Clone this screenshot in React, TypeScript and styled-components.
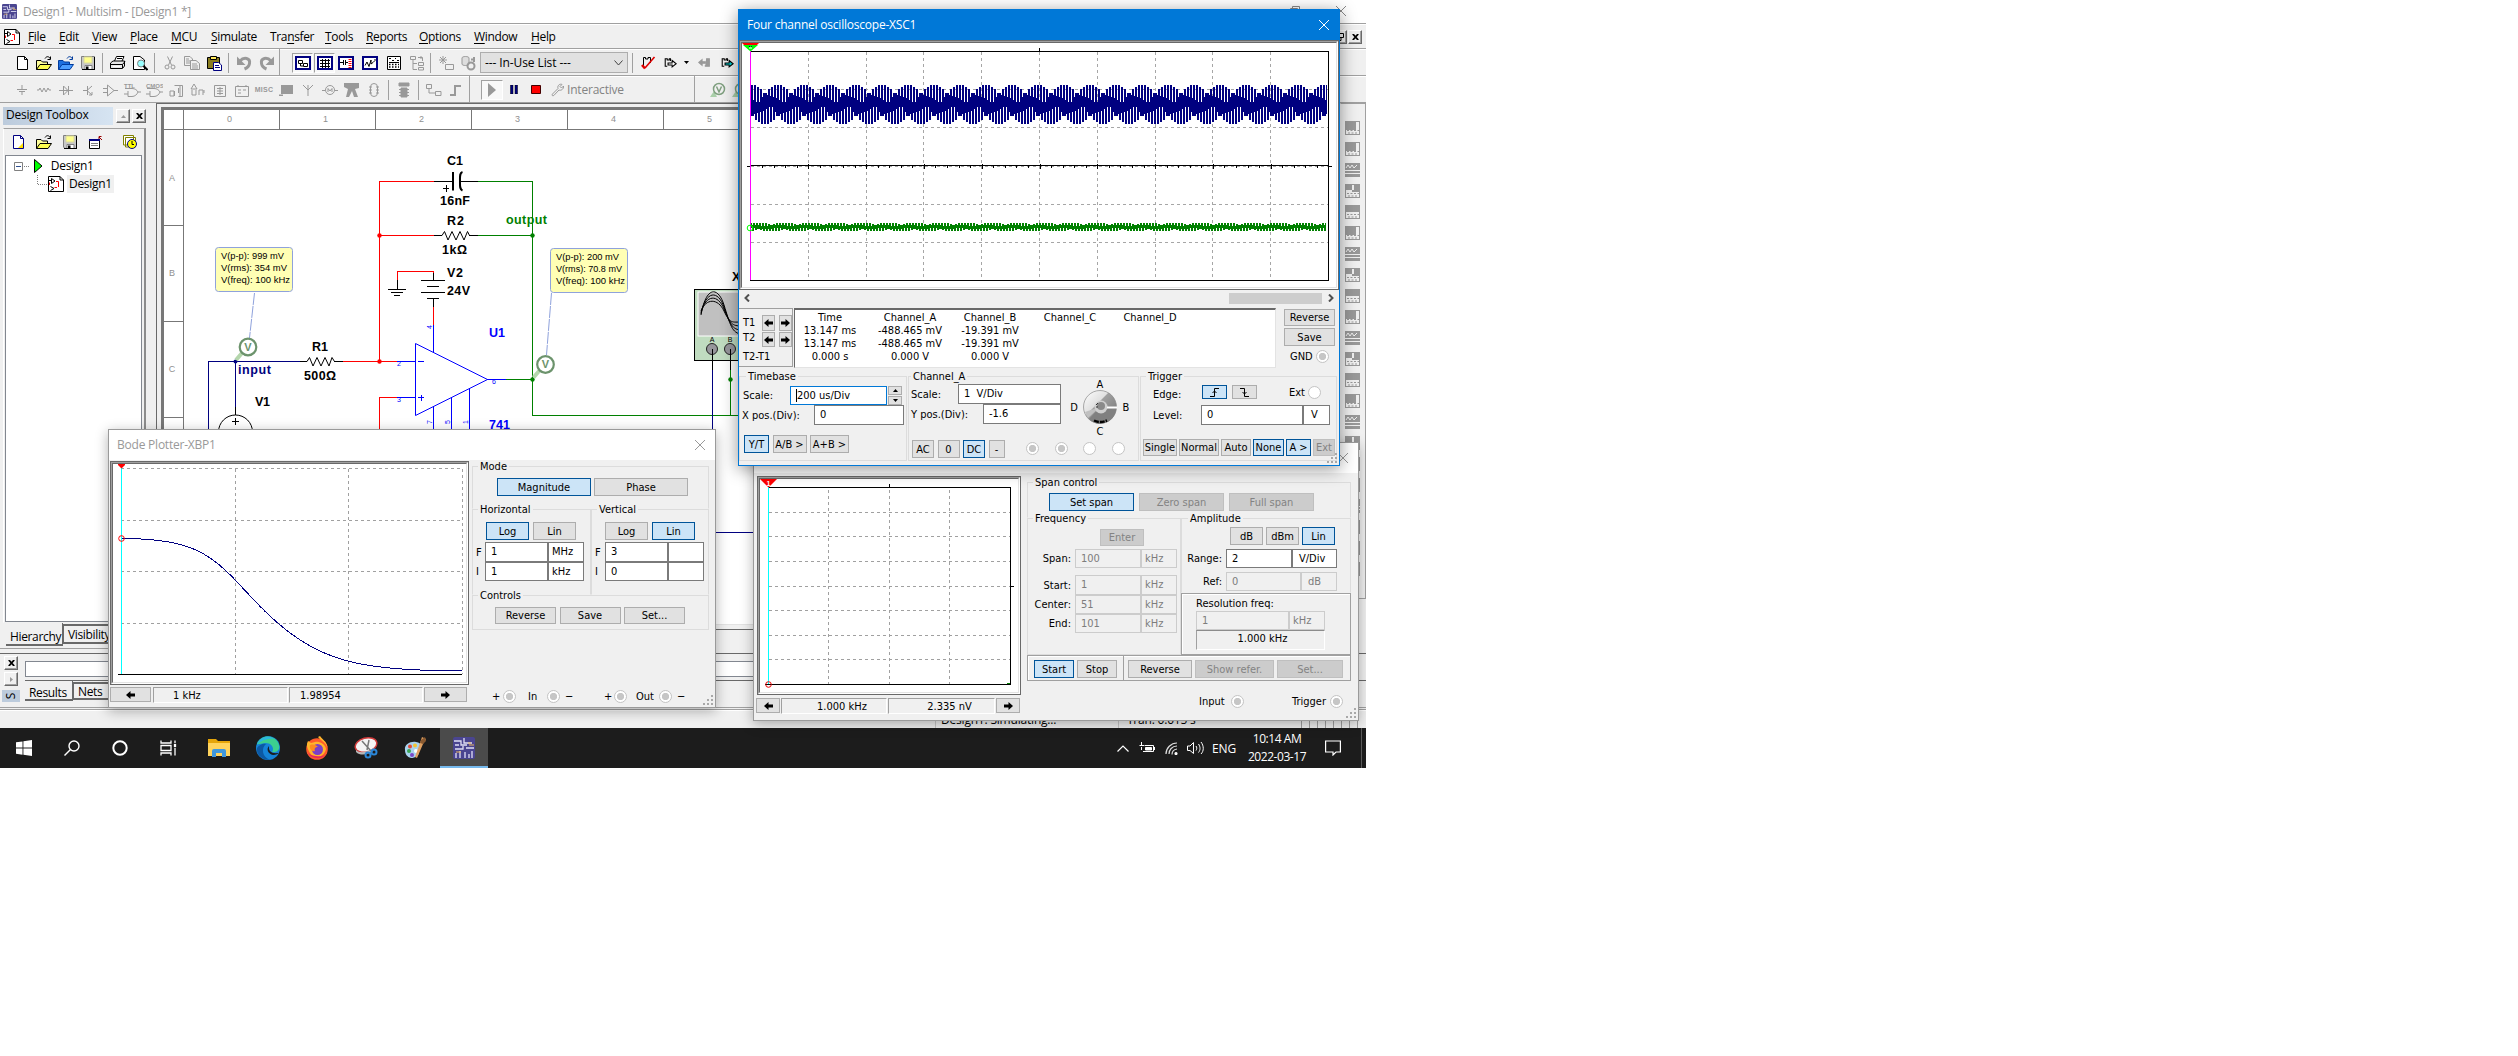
import React from "react";
import styled, { createGlobalStyle, css } from "styled-components";

const UI = `"Open Sans", "Noto Sans", sans-serif`;
const TAHOMA = `"DejaVu Sans Condensed", "DejaVu Sans", sans-serif`;
const ARIAL = `"Liberation Sans", Arial, sans-serif`;

const Global = createGlobalStyle`
  html, body { margin: 0; background: #fff; }
  * { box-sizing: border-box; }
  svg { display: block; flex: none; }
`;

/* ---------- desktop and main window ---------- */

const Desktop = styled.div`
  position: relative;
  width: 1366px;
  height: 768px;
  overflow: hidden;
  display: flex;
  flex-direction: column;
  background: #f0f0f0;
  font: 12px ${UI};
  color: #000;
  white-space: pre;
`;

const MainWindow = styled.div`
  height: 728px;
  display: flex;
  flex-direction: column;
  background: #f0f0f0;
`;

const TitleBar = styled.div`
  height: 24px;
  flex: none;
  display: flex;
  align-items: center;
  padding: 0 20px 1px 2px;
  background: #fff;
  border-bottom: 1px solid #a0a0a0;
  color: #999;
`;

const TitleText = styled.span`
  margin-left: 6px;
  letter-spacing: -0.25px;
`;

const CaptionButtons = styled.div`
  margin-left: auto;
  display: flex;
  gap: 36px;
  align-items: center;
`;

const MenuBar = styled.div`
  height: 25px;
  flex: none;
  display: flex;
  align-items: center;
  padding-left: 4px;
  border-bottom: 1px solid #a0a0a0;
  border-top: 1px solid #fff;
`;

const MenuItem = styled.span<{ $w: number }>`
  width: ${(p) => p.$w}px;
  letter-spacing: -0.35px;
  u { text-underline-offset: 2px; }
`;

const MdiButtons = styled.div`
  margin-left: auto;
  margin-right: 4px;
  display: flex;
  gap: 1px;
`;

const RaisedButton = styled.div`
  width: 14px;
  height: 14px;
  display: flex;
  align-items: center;
  justify-content: center;
  background: #f0f0f0;
  border: 1px solid;
  border-color: #fff #696969 #696969 #fff;
  box-shadow: inset -1px -1px 0 #a0a0a0;
`;

const ToolRow = styled.div`
  height: 27px;
  flex: none;
  display: flex;
  align-items: center;
  padding-left: 11px;
  border-bottom: 1px solid #a0a0a0;
  border-top: 1px solid #fff;
`;

const Slot = styled.div<{ $w?: number; $sunken?: boolean }>`
  width: ${(p) => p.$w ?? 22}px;
  height: 22px;
  flex: none;
  display: flex;
  align-items: center;
  justify-content: center;
  ${(p) =>
    p.$sunken &&
    css`
      height: 20px;
      background: #f8f8f8;
      border: 1px solid;
      border-color: #a0a0a0 #fff #fff #a0a0a0;
    `}
`;

const Sep = styled.div<{ $l?: number; $r?: number; $full?: boolean }>`
  width: 1px;
  height: ${(p) => (p.$full ? 27 : 20)}px;
  flex: none;
  background: #a0a0a0;
  margin: 0 ${(p) => p.$r ?? 4}px 0 ${(p) => p.$l ?? 3}px;
`;

const Combo = styled.div`
  width: 148px;
  height: 21px;
  flex: none;
  display: flex;
  align-items: center;
  justify-content: space-between;
  padding: 0 4px;
  letter-spacing: -0.1px;
  background: #e1e1e1;
  border: 1px solid #adadad;
`;

const SimMode = styled.span`
  width: 127px;
  letter-spacing: -0.2px;
  color: #838383;
`;

const Middle = styled.div`
  height: 546px;
  flex: none;
  display: flex;
`;

const LeftDock = styled.div`
  width: 156px;
  flex: none;
  display: flex;
  flex-direction: column;
  padding: 4px 10px 0 3px;
  border-bottom: 1px solid #a0a0a0;
`;

const DockHeader = styled.div`
  height: 18px;
  flex: none;
  display: flex;
  align-items: center;
`;

const DockTitle = styled.div`
  width: 110px;
  height: 18px;
  line-height: 16px;
  padding-left: 3px;
  margin-right: 3px;
  background: linear-gradient(90deg, #bccbdc, #d6e4f2);
  letter-spacing: -0.25px;
`;

const DockPanel = styled.div`
  width: 143px;
  height: 495px;
  margin-top: 3px;
  flex: none;
  display: flex;
  flex-direction: column;
  border: 1px solid;
  border-color: #a0a0a0 #a0a0a0 transparent #fff;
  border-right: 2px solid #8c8c8c;
`;

const DockTools = styled.div`
  height: 26px;
  flex: none;
  display: flex;
  align-items: center;
  padding-left: 4px;
`;

const Tree = styled.div`
  flex: 1;
  margin: 0 2px 0 1px;
  padding-top: 1px;
  background: #fff;
  border: 1px solid #828790;
  display: flex;
  flex-direction: column;
`;

const TreeRow = styled.div<{ $indent: number }>`
  height: 18px;
  display: flex;
  align-items: center;
  padding-left: ${(p) => p.$indent}px;
`;

const TreeLabel = styled.span<{ $sel?: boolean }>`
  height: 18px;
  line-height: 17px;
  padding: 0 2px;
  margin-left: 3px;
  letter-spacing: -0.3px;
  background: ${(p) => (p.$sel ? "#f0f0f0" : "transparent")};
`;

const TabStrip = styled.div`
  display: flex;
  align-items: flex-start;
  padding-left: 3px;
  height: 24px;
  flex: none;
`;

const Tab = styled.div<{ $w: number; $active?: boolean; $h: number; $top?: number }>`
  width: ${(p) => p.$w}px;
  height: ${(p) => p.$h}px;
  margin-top: ${(p) => (p.$active ? 0 : 1)}px;
  padding: ${(p) => p.$top ?? (p.$active ? 5 : 0)}px 0 0 4px;
  line-height: 16px;
  letter-spacing: -0.35px;
  border: 1px solid #696969;
  border-width: ${(p) => (p.$active ? "0 1px 2px 0" : "2px 2px 2px 1px")};
`;

const Workspace = styled.div`
  flex: 1;
  min-width: 0;
  display: flex;
  flex-direction: column;
  border-left: 1px solid #696969;
  border-top: 1px solid #696969;
`;

const DocFrame = styled.div`
  height: 518px;
  flex: none;
  margin: 3px 0 0 4px;
  border: solid #777;
  border-width: 3px 0 0 3px;
  border-bottom: 1px solid #e3e3e3;
  background: #fff;
  overflow: hidden;
`;

const DocFoot = styled.div`
  flex: 1;
  margin-top: 4px;
  border-top: 1px solid #696969;
`;

const RightDock = styled.div`
  width: 26px;
  height: 496px;
  flex: none;
  padding: 16px 0 0 3px;
  display: flex;
  flex-direction: column;
  gap: 5px;
  border: 1px solid;
  border-color: #a0a0a0 #a0a0a0 #a0a0a0 #f0f0f0;
`;

const BottomDock = styled.div`
  height: 61px;
  flex: none;
  display: flex;
  padding-top: 4px;
  border-bottom: 1px solid #a0a0a0;
`;

const BottomInner = styled.div`
  flex: 1;
  display: flex;
  border-top: 1px solid #696969;
  border-bottom: 1px solid #a0a0a0;
  margin-bottom: 1px;
`;

const BottomRail = styled.div`
  width: 25px;
  padding: 2px 0 0 4px;
  display: flex;
  flex-direction: column;
  gap: 2px;
`;

const SideTitle = styled.div`
  width: 18px;
  height: 12px;
  margin: 2px 0 0 -2px;
  display: flex;
  align-items: center;
  justify-content: center;
  background: #bccbdc;
  span { transform: rotate(-90deg); font-size: 12px; line-height: 12px; }
`;

const BottomBody = styled.div`
  flex: 1;
  display: flex;
  flex-direction: column;
  padding-top: 7px;
`;

const ResultField = styled.div`
  height: 16px;
  flex: none;
  margin-right: 7px;
  background: #fff;
  border: 1px solid #828790;
`;

const ResultTabs = styled.div`
  margin-top: 3px;
  display: flex;
  align-items: flex-start;
  border-top: 1px solid #696969;
`;

const StatusBar = styled.div`
  flex: 1;
  display: flex;
  align-items: flex-start;
  border-top: 1px solid #fff;
  padding: 1px 6px 0 935px;
`;

const StatusCell = styled.div<{ $w: number }>`
  width: ${(p) => p.$w}px;
  height: 16px;
  line-height: 16px;
  padding-left: 5px;
  letter-spacing: -0.2px;
  border-left: 1px solid #c8c8c8;
`;

const Progress = styled.div`
  width: 58px;
  height: 16px;
  background: repeating-linear-gradient(90deg, #a0a0a0 0 1px, #f0f0f0 1px 8px);
`;

/* ---------- instrument windows ---------- */

const Floating = styled.div<{ $x: number; $y: number; $w: number; $h: number; $active?: boolean }>`
  position: absolute;
  left: ${(p) => p.$x}px;
  top: ${(p) => p.$y}px;
  width: ${(p) => p.$w}px;
  height: ${(p) => p.$h}px;
  display: flex;
  flex-direction: column;
  background: #f0f0f0;
  border: 1px solid ${(p) => (p.$active ? "#0078d7" : "#9a9a9a")};
  box-shadow: ${(p) => (p.$active ? "0 3px 16px rgba(0,0,0,.42)" : "0 3px 12px rgba(0,0,0,.3)")};
  font: 11px ${TAHOMA};
`;

const Caption = styled.div<{ $active?: boolean }>`
  height: 30px;
  flex: none;
  display: flex;
  align-items: center;
  justify-content: space-between;
  padding: 0 10px 1px 8px;
  font: 12px ${UI};
  letter-spacing: -0.22px;
  color: ${(p) => (p.$active ? "#fff" : "#999")};
  background: ${(p) => (p.$active ? "#0078d7" : "#fff")};
`;

const Columns = styled.div`
  flex: 1;
  min-height: 0;
  display: flex;
`;

const PlotColumn = styled.div<{ $w: number; $pad: string }>`
  width: ${(p) => p.$w}px;
  flex: none;
  padding: ${(p) => p.$pad};
  display: flex;
  flex-direction: column;
  align-items: flex-start;
`;

const PlotFrame = styled.div`
  flex: none;
  border: 1px solid #696969;
  background: #fff;
`;

const PlotInner = styled.div`
  border: 1px solid;
  border-color: #a0a0a0 #fff #fff #a0a0a0;
  > div {
    border: 1px solid;
    border-color: #696969 #e3e3e3 #e3e3e3 #696969;
  }
`;

const ReadoutRow = styled.div<{ $mt: number; $ml?: number }>`
  margin-top: ${(p) => p.$mt}px;
  margin-left: ${(p) => p.$ml ?? 0}px;
  height: 16px;
  display: flex;
  gap: 1px;
`;

const Readout = styled.div<{ $w: number; $pad?: number }>`
  width: ${(p) => p.$w}px;
  height: 16px;
  line-height: 15px;
  text-align: ${(p) => (p.$pad ? "left" : "center")};
  padding-left: ${(p) => p.$pad ?? 16}px;
  border: 1px solid;
  border-color: #a0a0a0 #fff #fff #a0a0a0;
`;

const Btn = styled.div<{ $w: number; $h?: number; $on?: boolean; $off?: boolean }>`
  width: ${(p) => p.$w}px;
  height: ${(p) => p.$h ?? 18}px;
  flex: none;
  display: flex;
  align-items: center;
  justify-content: center;
  background: ${(p) => (p.$on ? "#cce4f7" : p.$off ? "#cccccc" : "#e1e1e1")};
  border: 1px solid ${(p) => (p.$on ? "#005499" : p.$off ? "#bfbfbf" : "#adadad")};
  color: ${(p) => (p.$off ? "#838383" : "#000")};
`;

const BtnRow = styled.div<{ $gap: number; $pad?: string }>`
  display: flex;
  align-items: center;
  gap: ${(p) => p.$gap}px;
  padding: ${(p) => p.$pad ?? "0"};
`;

const Group = styled.div<{ $w: number; $h: number; $tight?: boolean }>`
  width: ${(p) => p.$w}px;
  height: ${(p) => p.$h}px;
  flex: none;
  display: flex;
  flex-direction: column;
  border: 1px solid #dcdcdc;
  ${(p) => p.$tight && "border-bottom-color: transparent;"}
`;

const Legend = styled.div<{ $ml: number }>`
  height: 14px;
  line-height: 14px;
  margin: -7px 0 0 ${(p) => p.$ml}px;
  padding: 0 2px;
  align-self: flex-start;
  background: #f0f0f0;
  flex: none;
`;

const SideBySide = styled.div`
  display: flex;
`;

const FieldRow = styled.div<{ $mt?: number; $h?: number; $pl?: number }>`
  display: flex;
  align-items: center;
  height: ${(p) => p.$h ?? 20}px;
  flex: none;
  margin-top: ${(p) => p.$mt ?? 0}px;
  padding-left: ${(p) => p.$pl ?? 0}px;
`;

const FieldLabel = styled.span<{ $w: number; $right?: boolean }>`
  width: ${(p) => p.$w}px;
  flex: none;
  text-align: ${(p) => (p.$right ? "right" : "left")};
  padding-right: ${(p) => (p.$right ? 4 : 0)}px;
`;

const Input = styled.div<{ $w: number; $off?: boolean; $focus?: boolean; $pl?: number; $h?: number }>`
  width: ${(p) => p.$w}px;
  height: ${(p) => p.$h ?? 20}px;
  flex: none;
  display: flex;
  align-items: center;
  padding-left: ${(p) => p.$pl ?? 5}px;
  padding-bottom: 1px;
  background: ${(p) => (p.$off ? "#f0f0f0" : "#fff")};
  border: 1px solid ${(p) => (p.$focus ? "#0078d7" : p.$off ? "#cccccc" : "#7a7a7a")};
  color: ${(p) => (p.$off ? "#7d7d7d" : "#000")};
`;

const Caret = styled.i`
  width: 1px;
  height: 13px;
  background: #000;
`;

const SidePanel = styled.div<{ $pad: string }>`
  flex: 1;
  display: flex;
  flex-direction: column;
  padding: ${(p) => p.$pad};
`;

const Terminals = styled.div<{ $pad: string }>`
  margin-top: auto;
  display: flex;
  align-items: center;
  padding: ${(p) => p.$pad};
`;

const Term = styled.span<{ $w: number; $pl?: number }>`
  width: ${(p) => p.$w}px;
  padding-left: ${(p) => p.$pl ?? 0}px;
  flex: none;
`;

const Radio = styled.span<{ $empty?: boolean }>`
  width: 13px;
  height: 13px;
  flex: none;
  border-radius: 50%;
  border: 1px solid #c4c4c4;
  background: ${(p) => (p.$empty ? "#fff" : "radial-gradient(circle, #c6c6c6 0 3.3px, #fff 4px)")};
`;

const ScrollBar = styled.div`
  height: 14px;
  margin-top: 1px;
  flex: none;
  display: flex;
  align-items: center;
  justify-content: space-between;
  padding: 0 5px 0 5px;
`;

const Thumb = styled.div`
  width: 93px;
  height: 11px;
  margin: 0 6px 0 auto;
  background: #cdcdcd;
`;

const MeasureRow = styled.div`
  height: 60px;
  flex: none;
  margin-top: 3px;
  display: flex;
  align-items: flex-start;
`;

const CursorBox = styled.div`
  width: 54px;
  height: 59px;
  padding: 6px 0 0 4px;
  display: flex;
  flex-direction: column;
  border: 1px solid #a0a0a0;
  border-left: 0;
`;

const CursorLine = styled.div<{ $h: number }>`
  height: ${(p) => p.$h}px;
  display: flex;
  gap: 4px;
  align-items: flex-start;
  line-height: 15px;
`;

const CursorName = styled.span<{ $up?: number }>`
  width: 15px;
  flex: none;
  margin-top: -${(p) => p.$up ?? 0}px;
`;

const MeasureTable = styled.div`
  width: 482px;
  height: 60px;
  margin-left: 1px;
  padding-top: 1px;
  display: grid;
  grid-template-columns: repeat(5, 80px);
  grid-auto-rows: 13px;
  line-height: 14px;
  text-align: center;
  background: #fff;
  border: 1px solid;
  border-color: #696969 #e3e3e3 #e3e3e3 #696969;
  border-top-width: 2px;
  span { margin-left: -5px; margin-right: 5px; }
`;

const MeasureActions = styled.div`
  margin-left: 8px;
  padding-top: 1px;
  display: flex;
  flex-direction: column;
  gap: 2px;
`;

const SettingsRow = styled.div`
  display: flex;
  margin-top: 8px;
  gap: 1px;
`;

const Spinner = styled.div`
  margin-left: 1px;
  display: flex;
  flex-direction: column;
  gap: 1px;
`;

const KnobGrid = styled.div`
  display: grid;
  grid-template-columns: 8px 44px 8px;
  grid-template-rows: 11px 34px 15px;
  align-content: start;
  align-items: center;
  justify-items: center;
  margin: -4px 0 0 8px;
`;

const ChannelTop = styled.div`
  display: flex;
  height: 57px;
  flex: none;
  margin-top: -1px;
`;

const ChannelFields = styled.div`
  width: 153px;
  display: flex;
  flex-direction: column;
  padding-left: 2px;
`;

const BorderedBox = styled.div<{ $w: number; $h: number; $pad: string }>`
  width: ${(p) => p.$w}px;
  height: ${(p) => p.$h}px;
  padding: ${(p) => p.$pad};
  border: 1px solid #a0a0a0;
  box-shadow: inset 1px 1px 0 #fff;
`;

const ActionStrip = styled.div`
  width: 324px;
  height: 26px;
  flex: none;
  display: flex;
  align-items: center;
  padding: 2px 5px 0 6px;
  border: 1px solid #a0a0a0;
  box-shadow: inset 1px 1px 0 #fff;
`;

const StripDivider = styled.i`
  width: 1px;
  height: 24px;
  margin: -2px 4px 0 6px;
  background: #a0a0a0;
`;

const Sunken = styled.div`
  width: 129px;
  height: 20px;
  line-height: 15px;
  padding-left: 4px;
  text-align: center;
  border: 1px solid;
  border-color: #8c8c8c #fff #fff #a0a0a0;
`;

const Grip = styled.svg`
  position: absolute;
  right: 1px;
  bottom: 1px;
`;

/* ---------- taskbar ---------- */

const Taskbar = styled.div`
  position: absolute;
  left: 0;
  top: 728px;
  width: 1366px;
  height: 40px;
  display: flex;
  align-items: stretch;
  background: #1c1c1c;
  color: #fff;
`;

const SystemButtons = styled.div`
  display: flex;
  width: 195px;
`;

const TaskButton = styled.div<{ $w: number; $active?: boolean }>`
  width: ${(p) => p.$w}px;
  display: flex;
  align-items: center;
  justify-content: center;
  ${(p) => p.$active && "background:#4b4b4b; border-bottom: 2px solid #76b9ed; padding-top:2px;"}
`;

const Tray = styled.div`
  margin-left: auto;
  display: flex;
  align-items: center;
`;

const TrayIcon = styled.div<{ $w: number; $pr?: number }>`
  width: ${(p) => p.$w}px;
  padding-right: ${(p) => p.$pr ?? 0}px;
  flex: none;
  display: flex;
  justify-content: center;
  letter-spacing: -0.2px;
`;

const Clock = styled.div`
  width: 78px;
  text-align: center;
  line-height: 18px;
  letter-spacing: -0.45px;
`;

const ShowDesktop = styled.div`
  width: 5px;
  height: 40px;
  border-left: 1px solid #5a5a5a;
`;

/* ---------- small drawings ---------- */

type IconProps = { children: React.ReactNode; w?: number; h?: number; vb?: string; c?: string; sw?: number };
const Ico = ({ children, w = 16, h = 16, vb, c = "#000", sw = 1 }: IconProps) => (
  <svg width={w} height={h} viewBox={vb ?? `0 0 ${w} ${h}`} fill="none" stroke={c} strokeWidth={sw}>
    {children}
  </svg>
);

const CloseX = ({ c, s = 10 }: { c: string; s?: number }) => (
  <Ico w={s} h={s} vb="0 0 10 10" c={c}><path d="M0 0L10 10M10 0L0 10" /></Ico>
);

const BoldX = () => <Ico w={7} h={6} c="#000" sw={1.8}><path d="M.8 0L6.2 6M6.2 0L.8 6" /></Ico>;

const Arrow = ({ left }: { left?: boolean }) => (
  <Ico w={9} h={8} c="none"><path fill="#000" d={left ? "M0 4L4.500 0V2.500H9V5.500H4.500V8Z" : "M9 4L4.500 0V2.500H0V5.500H4.500V8Z"} /></Ico>
);

const SchematicDoc = () => (
  <Ico>
    <path fill="#fff" d="M.5 .5H12L15.500 4V15.500H.5Z" />
    <path d="M12 .5V4H15.500M1 4.500H3M3.500 2.500V7.500L7 5ZM2.500 10.500L6 12.500L2.500 14.500" />
    <path stroke="#f00" d="M1.500 6.500V9M8 5.500H10.500V11M6.500 11.500H9" />
  </Ico>
);

const PageIcon = ({ navy }: { navy?: boolean }) => (
  <Ico c={navy ? "#000080" : "#000"}>
    <path fill="#fff" d="M3.500 1.500H10.500L13.500 4.500V14.500H3.500Z" />
    <path d="M10.500 1.500V4.500H13.500" />
    {navy && <path fill="#ffe000" stroke="none" d="M13 9V14H8Z" />}
  </Ico>
);

const FolderIcon = ({ blue }: { blue?: boolean }) => (
  <Ico>
    <path fill={blue ? "#1c6fe0" : "#ffff9c"} stroke={blue ? "#003a9c" : "#000"} d="M.5 14.500V5.500H5L6.500 7H11.500V9" />
    <path fill={blue ? "#4a9cff" : "#ffff50"} stroke={blue ? "#003a9c" : "#000"} d="M.5 14.500L4 9.500H15.500L12 14.500Z" />
    <path stroke={blue ? "#003a9c" : "#000"} d="M9 3.500C10.500 1 13 1 14.500 4M14.500 1.500V4.500H11.500" />
  </Ico>
);

const SaveIcon = () => (
  <Ico c="#808080">
    <path fill="#c8c8c8" d="M1.500 1.500H14.500V14.500H3L1.500 13Z" />
    <path fill="#ffff8c" stroke="#d8d8a0" d="M4 2H12V8H4Z" />
    <path fill="#fff" stroke="#808080" d="M5 10.500H12V14.500H5Z" />
    <path fill="#000" stroke="none" d="M6 11.500H8.500V14.500H6ZM14 2H15V15H2V14H14Z" />
  </Ico>
);

const PrintIcon = () => (
  <Ico>
    <path fill="#fff" d="M4.500 6L6.500 1.500H14L12 6" />
    <path fill="#e8e8e8" d="M.5 11V8L3 6H14.500V11L12.500 13.500H.5ZM.5 9.500H12.500V13M12.500 9.500L15 6.500M7 3.500H12" />
    <path stroke="#fff" d="M3 11.500H10" />
  </Ico>
);

const PreviewIcon = () => (
  <Ico>
    <path fill="#fff" d="M1.500 1.500H8L12.500 5V14.500H1.500Z" />
    <circle cx="9" cy="8.500" r="3.500" fill="#9ff" stroke="#808080" />
    <path strokeWidth="2" d="M11.500 11L15.500 15" />
  </Ico>
);

const CutIcon = () => (
  <Ico c="#999"><path d="M5.500 1.500L9.500 10M10.500 1.500L6.500 10" /><circle cx="5" cy="12" r="2" /><circle cx="11" cy="12" r="2" /></Ico>
);
const CopyIcon = () => (
  <Ico c="#999"><path fill="#f0f0f0" d="M.5 1.500H6L8.500 4V10.500H.5ZM2 4H5M2 6H6M2 8H6" /><path fill="#f0f0f0" d="M6.500 5.500H12L15.500 8.500V14.500H6.500ZM8 9H13M8 11H14M8 13H14" /></Ico>
);
const PasteIcon = () => (
  <Ico><path fill="#8a7d20" d="M1.500 2.500H13.500V13.500H1.500Z" /><path fill="#ffe95a" d="M4.500 1.500H10.500V4.500H4.500Z" /><path fill="#fff" stroke="#000080" d="M7.500 7.500H12.500L15.500 10V15.500H7.500ZM9 10.500H13M9 12.500H14" /></Ico>
);
const UndoIcon = ({ flip }: { flip?: boolean }) => (
  <Ico c="#999" sw={3}><g transform={flip ? "matrix(-1 0 0 1 16 0)" : undefined}><path d="M4 6C8 1.500 14.500 3 13.500 8.500C13 11.500 11 13 8.500 14" /><path fill="#999" stroke="none" d="M1 1.500V10H9.500Z" /></g></Ico>
);

const HierIcon = () => (
  <Ico c="#000080"><path fill="#fff" strokeWidth="2" d="M1 2H15V14H1Z" /><path stroke="#000" d="M3.500 5.500H7.500V8.500H3.500ZM8.500 8.500H12.500V11.500H8.500ZM5.500 9V11H8" /></Ico>
);
const GridIcon = () => (
  <Ico c="#000080"><path fill="#fff" strokeWidth="2" d="M1 2H15V14H1Z" /><path stroke="#000" d="M3 5.500H13M3 8.500H13M3 11.500H13M5.500 4V13M8.500 4V13M11.500 4V13" /></Ico>
);
const CompIcon = () => (
  <Ico c="#000080"><path fill="#fff" strokeWidth="2" d="M1 2H15V14H1Z" /><path stroke="#000" d="M2 7.500H5M5.500 5V10M7.500 5V10M8 7.500H10" /><path stroke="#f00" strokeWidth="3" strokeDasharray="1 1" d="M12 4V13" /></Ico>
);
const GraphIcon = () => (
  <Ico c="#000080"><path fill="#fff" strokeWidth="2" d="M1 2H15V14H1Z" /><path stroke="#000" d="M3 10.500L5 7L7 11.500L9 5V9L11 7.500L13 5.500V4" /></Ico>
);
const CalcIcon = () => (
  <Ico>
    <path fill="#fff" d="M1.500 1.500H14.500V14.500H1.500Z" /><path d="M3 3.500H5M6 5.500H8M9 3.500H10M11 5.500H13M3 7.500H13" />
    <path strokeWidth="1.500" strokeDasharray="1.500 1.500" d="M3 9.500H13M3 12H13" />
  </Ico>
);
const TreeIcon = () => (
  <Ico c="#999"><path d="M1.500 1.500H6.500V4.500H1.500ZM4 5V14.500H8M4 8.500H8M9.500 7.500H14.500V10.500H9.500ZM9.500 12.500H14.500V15H9.500ZM9 2.500H13.500V6M12 1V4" /></Ico>
);
const WizardIcon = () => (
  <Ico c="#999"><path d="M5 1V9M1 5H9M2 2L8 8M8 2L2 8M7.500 9.500H15.500V14.500H7.500Z" /></Ico>
);
const DbIcon = () => (
  <Ico c="#999"><path fill="#ddd" d="M1 3C1 1 8 1 8 3V9C8 11 1 11 1 9Z" /><circle cx="10" cy="11" r="3.500" strokeWidth="2" /><path strokeWidth="2" d="M10 4.500H14M13 2V7" /></Ico>
);
const CheckRed = () => (
  <Ico><path d="M3.500 11V2.500H5.500V4H8V2.500H10.500V8" /><path stroke="#e00000" strokeWidth="1.600" d="M5 13L14.500 2" /><path stroke="#e00000" strokeWidth="2.500" d="M2 10L5 13.500" /></Ico>
);
const PartArrow = ({ gray, cyan }: { gray?: boolean; cyan?: boolean }) => (
  <Ico w={13} h={13} vb="0 0 16 16" c={gray ? "#999" : "#000"} sw={1.3}>
    {gray ? (
      <path fill="#999" d="M1 8L5 4.500V7H9V9H5V11.500ZM10 3.500H14V12.500H9V11" />
    ) : (
      <>
        <path d="M4 12.500H1.500V3.500H4V5H6.500V3.500H8V6" />
        <path fill={cyan ? "#00d0d0" : "#fff"} d="M5 8.500H10V5.500L15 9.500L10 13.500V11H5Z" />
      </>
    )}
  </Ico>
);

const gp = (d: string) => <Ico w={18} h={16} c="#999"><path d={d} /></Ico>;
const GlyphText = styled.span`
  font: bold 7px ${ARIAL};
  color: #999;
  letter-spacing: 0.3px;
`;

const Gate = ({ label }: { label: string }) => (
  <Ico w={18} h={16} c="#999">
    <path d="M2 6.500H9C12 6.500 14 8 15 10C14 12.500 12 14.500 9 14.500H5V9M1 12H5M15 10H18" />
    <text x="1" y="5.500" fontFamily="Liberation Sans" fontSize="6" fontWeight="bold" fill="#999" stroke="none">{label}</text>
  </Ico>
);

const WrenchIcon = () => (
  <Ico w={13} h={14} c="#999"><path d="M1.500 11L7 5.500C6 2 9.500 .5 11 1.500L9 3.500L10.500 5L12.500 3C13 6 10 8 8 7L2.800 12.500C1.500 13.500 .5 12 1.500 11Z" /></Ico>
);

const ProbeTool = () => (
  <Ico w={18} h={18} c="#7f9f7f"><path fill="#a9cfa9" stroke="none" d="M5 10L1 16H8Z" /><circle cx="10" cy="8" r="5.500" strokeWidth="1.500" /><path strokeWidth="1.500" d="M7.500 5.500L10 11L12.500 5.500" /></Ico>
);

const AppIcon = ({ s }: { s: number }) => (
  <Ico w={s} h={s} vb="0 0 22 22" c="#e0dff5">
    <rect width="22" height="22" rx="2" fill="#4a4590" stroke="none" />
    <path strokeWidth="1.300" d="M1 4H8V8H14M11 1V6H19M2 12H10V9M13 11H21M3 21V16M7 21V14M12 21V15M16 21V17M19 21V14M2 8H6" />
    <path stroke="#e8b860" d="M16 8H21M15 6H18M3 15H8" />
  </Ico>
);

const InstIcon = ({ kind }: { kind: number }) => (
  <Ico w={17} h={16} c="none">
    <path fill="#999" d="M1 1H16V15H1Z" />
    {kind % 4 === 0 && <path fill="#f0f0f0" d="M2 8H15V14H2Z" />}
    {kind % 4 === 1 && <path fill="#f0f0f0" d="M8 2H10V7H2V9H15V14H2V9H8Z" />}
    {kind % 4 === 2 && <path stroke="#f0f0f0" fill="none" d="M2 6L4 3L6 6L8 3L10 6L13 3M1 8.500H16M1 11.500H16" />}
    {kind % 4 === 3 && <path fill="#f0f0f0" d="M12 2H15V14H12ZM2 10H12V14H2Z" />}
    <path stroke="#999" strokeDasharray="2 1.500" d="M3 10.500H15M4 13H14" />
  </Ico>
);

const GripDots = () => (
  <Grip width="11" height="11" viewBox="0 0 11 11" fill="#a8a8a8">
    {[[8, 0], [4, 4], [8, 4], [0, 8], [4, 8], [8, 8]].map(([x, y]) => <rect key={`${x}-${y}`} x={x} y={y} width="2" height="2" />)}
  </Grip>
);

/* ---------- schematic ---------- */

const DesignNote = ({ x, y, lines }: { x: number; y: number; lines: string[] }) => (
  <g>
    <rect x={x} y={y} width="77" height="44" rx="3" fill="#ffffb4" stroke="#8fa2dc" />
    {lines.map((t, i) => (
      <text key={t} x={x + 5.5} y={y + 11.7 + i * 12} fontSize="9.700" textLength={[63, 66, 69][i]} lengthAdjust="spacingAndGlyphs">{t}</text>
    ))}
  </g>
);

const VProbe = ({ x, y }: { x: number; y: number }) => (
  <g>
    <path d={`M${x - 6} ${y + 6}L${x - 12} ${y + 13}`} stroke="#b4d6ac" strokeWidth="4" />
    <circle cx={x} cy={y} r="8.300" fill="#fff" stroke="#6c936c" strokeWidth="2.200" />
    <text x={x} y={y + 3.9} textAnchor="middle" fontSize="11" fontWeight="bold" fill="#6c936c">V</text>
  </g>
);

const Line = ({ d, c }: { d: string; c: string }) => <path d={d} stroke={c} fill="none" shapeRendering="crispEdges" />;

const Schematic = () => (
  <svg width="1176" height="514" viewBox="164 110 1176 514" fontFamily={ARIAL} fontSize="9" fill="#000">
    <g stroke="#777" shapeRendering="crispEdges">
      <path d="M164 129.500H1340M183.500 110V624" />
      {[279, 375, 471, 567, 663, 759].map((x) => <path key={x} d={`M${x + 0.5} 110V129`} />)}
      {[225, 321, 417, 513, 609].map((y) => <path key={y} d={`M164 ${y + 0.5}H183`} />)}
    </g>
    <g fill="#909090" textAnchor="middle">
      {[0, 1, 2, 3, 4, 5].map((n) => <text key={n} x={229.5 + n * 96} y="122">{n}</text>)}
      {["A", "B", "C", "D", "E"].map((n, i) => <text key={n} x="172" y={180.5 + i * 95.7}>{n}</text>)}
    </g>
    <Line c="#f00" d="M434 181.500H379.500V361.500M379 235.500H434M343 361.500H397M397.500 280V271.500H433V273M433.500 307V326M397 397.500H379.500V432" />
    <Line c="#008000" d="M478 181.500H532.500V415.500H740M478 235.500H532M506 379.500H532M730.500 370V415" />
    <Line c="#000080" d="M300 361.500H208.500V432M235.500 361V407M712.500 370V432M700 532.500H760" />
    <Line c="#000" d="M434 181.500H452M461 181.500H478M434 235.500H442M469 235.500H478M421 280.500H445M427 286.500H439M421 292.500H445M427 298.500H439M433.500 273V280M433.500 299V307M397.500 280V289M388 289.500H406M391 292.500H403M394 295.500H400M300 361.500H307M334 361.500H343M235.500 407V415M232 421.500H239M235.500 418V425M443 188.500H449M446.500 185V192" />
    <path d="M453 172V190.500" stroke="#000" strokeWidth="2" />
    <path d="M462.500 172C459.500 173 460 176 460 181S459.500 189 462.500 190.500" stroke="#000" strokeWidth="2" fill="none" />
    <path d="M442 235.500L444.500 231.500L448 240L452 231.500L456 240L460 231.500L464 240L467.500 231.500L469.500 235.500M307 361.500L309.500 357.500L313 366L317 357.500L321 366L325 357.500L329 366L332 357.500L334.500 361.500" stroke="#000" fill="none" />
    <path d="M415.500 343.500V415.500L487.500 379.500Z" stroke="#00f" fill="none" />
    <Line c="#00f" d="M397 361.500H415M397 397.500H415M487 379.500H506M433.500 325V352M433.500 407V432M451.500 398V432M469.500 389V432M418 361.500H424M418 397.500H424M421.500 395V401" />
    <g fill="#f00"><circle cx="379.500" cy="235.500" r="2.200" /><circle cx="379.500" cy="361.500" r="2.200" /></g>
    <g fill="#008000"><circle cx="532.500" cy="235.500" r="2.200" /><circle cx="532.500" cy="379.500" r="2.200" /><circle cx="730.500" cy="379.500" r="2.200" /></g>
    <circle cx="235.500" cy="361.500" r="2" fill="#000080" />
    <circle cx="235.500" cy="432" r="17" stroke="#000" fill="none" />
    <g fontWeight="bold" fontSize="12.500">
      <text x="447" y="165" textLength="16">C1</text>
      <text x="440" y="204.500" textLength="30">16nF</text>
      <text x="447" y="225" textLength="17">R2</text>
      <text x="442" y="254" textLength="25">1kΩ</text>
      <text x="447" y="277" textLength="16">V2</text>
      <text x="447" y="295" textLength="23">24V</text>
      <text x="312" y="351" textLength="16">R1</text>
      <text x="304" y="380" textLength="32">500Ω</text>
      <text x="255" y="405.500" textLength="15">V1</text>
      <text x="732" y="281">XSC1</text>
      <g fill="#00f"><text x="489" y="337" textLength="16">U1</text><text x="489" y="428.500" textLength="21">741</text></g>
      <text x="506" y="224" textLength="41" fill="#008000">output</text>
      <text x="238" y="374" textLength="33" fill="#000080">input</text>
    </g>
    <g fill="#00f" fontSize="7">
      <text x="397" y="366">2</text><text x="397" y="402">3</text><text x="492" y="384">6</text>
      <text transform="translate(431.500 329) rotate(-90)">4</text>
      <text transform="translate(431.500 424) rotate(-90)">7</text>
      <text transform="translate(449.500 424) rotate(-90)">5</text>
      <text transform="translate(467.500 424) rotate(-90)">1</text>
    </g>
    <path d="M254.500 293L249.500 338M551.500 293L546.500 355" stroke="#8fa2dc" strokeDasharray="12 1" />
    <DesignNote x={215.5} y={247.5} lines={["V(p-p): 999 mV", "V(rms): 354 mV", "V(freq): 100 kHz"]} />
    <DesignNote x={550.5} y={248.5} lines={["V(p-p): 200 mV", "V(rms): 70.8 mV", "V(freq): 100 kHz"]} />
    <VProbe x={248} y={347} />
    <VProbe x={545.5} y={364.5} />
    <rect x="694.500" y="289.500" width="80" height="71" fill="#c0dcc0" stroke="#000" />
    <rect x="698" y="292" width="70" height="44" fill="#c0c0c0" stroke="#fff" />
    <g stroke="#000" fill="none">
      {[0, 4, 8, 12].map((o) => <path key={o} d={`M701 ${315 - o / 3}C706 ${286 + o} 718 ${286 + o} 724 ${305 + o / 2}S732 ${334 - o} 742 ${334 - o}`} />)}
    </g>
    <g fill="#96969b" stroke="#222"><circle cx="712" cy="349" r="5.500" /><circle cx="730" cy="349" r="5.500" /></g>
    <Line c="#000" d="M712.500 349V370M730.500 349V370" />
    <g fontSize="7" textAnchor="middle"><text x="712" y="342">A</text><text x="730" y="342">B</text></g>
  </svg>
);

/* ---------- plots ---------- */

const SCOPE_GRID = [808, 866, 923, 981, 1039, 1097, 1155, 1212, 1270];

/* One sample per pixel column, drawn down to the next sample and back halfway to the previous one. */
function waveColumns(mid: number, amp: number, phase: number, end: number) {
  const period = 26 / 9;
  const at = (x: number) => Math.sin((2 * Math.PI * (x - 750)) / period + phase);
  let d = "";
  for (let x = 751; x < end; x++) {
    const v = at(x);
    const a = (at(x - 1) + v) / 2;
    const b = at(x + 1);
    const y0 = Math.round(mid - amp * Math.max(v, a, b));
    const y1 = Math.round(mid - amp * Math.min(v, a, b)) + 1;
    d += `M${x + 0.5} ${y0}V${y1}`;
  }
  return d;
}

const ScopePlot = () => (
  <svg width="594" height="244" viewBox="742 43 594 244" shapeRendering="crispEdges" fill="none">
    <g stroke="#a6a6a6" strokeDasharray="3 3">
      {SCOPE_GRID.map((x) => <path key={x} d={`M${x + 0.5} 52V280`} />)}
      {[89, 127, 166, 204, 242].map((y) => <path key={y} d={`M751 ${y + 0.5}H1328`} />)}
    </g>
    <path stroke="#000" d="M750 51.500H1328.500V280.500H750M750 165.500H1329M747 166.500H751M1328 166.500H1332M1039.500 48V51" />
    <g stroke="#000">
      {Array.from({ length: 49 }, (_, i) => {
        const x = Math.round(750.5 + (i + 1) * 11.56) + 0.5;
        return <path key={i} d={(i + 1) % 5 === 0 ? `M${x} 164V169` : `M${x} 165V168`} />;
      })}
    </g>
    <path stroke="#000080" d={waveColumns(104, 19.4, -2.779, 1327)} />
    <path stroke="#008000" d={waveColumns(226.5, 3.9, -1.2, 1326)} />
    <path stroke="#f0f" d="M750.500 51V280" />
    <g shapeRendering="auto"><path fill="#f00" d="M742 43H759L757 45H744Z" /><path fill="#0f0" d="M743 45H758L750.500 51.500Z" />
      <path stroke="#000080" strokeDasharray="1 1" d="M749 46.500H752" /><path stroke="#fff" d="M749 48H752" />
      <circle cx="750" cy="228" r="2.800" stroke="#0f0" />
    </g>
  </svg>
);

function bodeCurve() {
  let d = "";
  for (let x = 122; x <= 462; x += 1) {
    const f = Math.pow(10, ((x - 121) / 341) * 3);
    const h = 2 / Math.sqrt(1 + (f / 9.947) ** 2);
    let y = 674.8 - 68.67 * h + 1.9 * Math.exp(-(((x - 250) / 32) ** 2));
    if (x > 348) y -= (2.6 * (x - 348)) / 114;
    d += `${d ? "L" : "M"}${x} ${y.toFixed(1)}`;
  }
  return d;
}

const BodePlot = () => (
  <svg width="353" height="218" viewBox="113 464 353 218" fill="none">
    <g stroke="#a0a0a0" strokeDasharray="3 3" shapeRendering="crispEdges">
      {[235, 348, 462].map((x) => <path key={x} d={`M${x + 0.5} 469V674`} />)}
      {[468, 520, 571, 623].map((y) => <path key={y} d={`M121 ${y + 0.5}H463`} />)}
    </g>
    <path d="M118 674.500H462" stroke="#000" shapeRendering="crispEdges" />
    <path d={bodeCurve()} stroke="#000080" shapeRendering="crispEdges" />
    <path d="M121.500 464V674" stroke="#0ff" shapeRendering="crispEdges" />
    <path fill="#f00" d="M118 464H125V465L121.500 468.500L118 465Z" />
    <circle cx="121.500" cy="538.500" r="2.800" stroke="#f00" />
  </svg>
);

const SpectrumPlot = () => (
  <svg width="258" height="213" viewBox="760 479 258 213" fill="none">
    <g stroke="#a0a0a0" strokeDasharray="3 3" shapeRendering="crispEdges">
      {[828, 889, 949].map((x) => <path key={x} d={`M${x + 0.5} 490V684`} />)}
      {[512, 536, 561, 586, 610, 635, 659].map((y) => <path key={y} d={`M769 ${y + 0.5}H1010`} />)}
    </g>
    <path stroke="#000" shapeRendering="crispEdges" d="M768 487.500H1010.500V684.500H765M889.500 484V487M1010 586.500H1014" />
    <path stroke="#0ff" shapeRendering="crispEdges" d="M768.500 487V684" />
    <path fill="#f00" d="M760 479H777L768.500 487.500Z" />
    <text x="766.500" y="485.500" fontSize="7" fontWeight="bold" fontFamily="Liberation Sans" fill="#fff">1</text>
    <circle cx="768.500" cy="684.500" r="2.800" stroke="#e00" />
    <path stroke="#008000" d="M1007 683.500H1010" />
  </svg>
);

const Framed = ({ children }: { children: React.ReactNode }) => (
  <PlotFrame><PlotInner><div>{children}</div></PlotInner></PlotFrame>
);

/* ---------- windows ---------- */

const BodePlotter = () => (
  <Floating $x={108} $y={429} $w={608} $h={279}>
    <Caption><span>Bode Plotter-XBP1</span><CloseX c="#999" /></Caption>
    <Columns>
      <PlotColumn $w={362} $pad="1px 0 0 1px">
        <Framed><BodePlot /></Framed>
        <ReadoutRow $mt={2}>
          <Btn $w={41} $h={15}><Arrow left /></Btn>
          <span />
          <Readout $w={135} $pad={19}>1 kHz</Readout>
          <Readout $w={134} $pad={10}>1.98954</Readout>
          <Btn $w={43} $h={15}><Arrow /></Btn>
        </ReadoutRow>
      </PlotColumn>
      <SidePanel $pad="6px 0 4px 1px">
        <Group $w={237} $h={43} $tight>
          <Legend $ml={5}>Mode</Legend>
          <BtnRow $gap={3} $pad="4px 0 0 24px">
            <Btn $w={94} $on>Magnitude</Btn>
            <Btn $w={94}>Phase</Btn>
          </BtnRow>
        </Group>
        <SideBySide>
          <Group $w={119} $h={86} $tight>
            <Legend $ml={5}>Horizontal</Legend>
            <BtnRow $gap={4} $pad="5px 0 2px 13px"><Btn $w={43} $on>Log</Btn><Btn $w={43}>Lin</Btn></BtnRow>
            <FieldRow $pl={3}><FieldLabel $w={9}>F</FieldLabel><Input $w={63}>1</Input><Input $w={36} $pl={3}>MHz</Input></FieldRow>
            <FieldRow $h={19} $pl={3}><FieldLabel $w={9}>I</FieldLabel><Input $h={19} $w={63}>1</Input><Input $h={19} $w={36} $pl={3}>kHz</Input></FieldRow>
          </Group>
          <Group $w={118} $h={86} $tight>
            <Legend $ml={5}>Vertical</Legend>
            <BtnRow $gap={4} $pad="5px 0 2px 13px"><Btn $w={43}>Log</Btn><Btn $w={43} $on>Lin</Btn></BtnRow>
            <FieldRow $pl={3}><FieldLabel $w={10}>F</FieldLabel><Input $w={63}>3</Input><Input $w={36} /></FieldRow>
            <FieldRow $h={19} $pl={3}><FieldLabel $w={10}>I</FieldLabel><Input $h={19} $w={63}>0</Input><Input $h={19} $w={36} /></FieldRow>
          </Group>
        </SideBySide>
        <Group $w={237} $h={35}>
          <Legend $ml={5}>Controls</Legend>
          <BtnRow $gap={3.5} $pad="4px 0 0 22px">
            <Btn $w={61} $h={17}>Reverse</Btn><Btn $w={61} $h={17}>Save</Btn><Btn $w={61} $h={17}>Set...</Btn>
          </BtnRow>
        </Group>
        <Terminals $pad="0 0 0 20px">
          <Term $w={11}>+</Term><Radio /><Term $w={31} $pl={12}>In</Term><Radio /><Term $w={44} $pl={5}>−</Term>
          <Term $w={10}>+</Term><Radio /><Term $w={32} $pl={9}>Out</Term><Radio /><Term $w={20} $pl={5}>−</Term>
        </Terminals>
      </SidePanel>
    </Columns>
    <GripDots />
  </Floating>
);

const SpectrumAnalyzer = () => (
  <Floating $x={753} $y={442} $w={606} $h={279}>
    <Caption><span /><CloseX c="#999" /></Caption>
    <Columns>
      <PlotColumn $w={269} $pad="3px 0 0 3px">
        <Framed><SpectrumPlot /></Framed>
        <ReadoutRow $mt={3} $ml={-1}>
          <Btn $w={24} $h={15}><Arrow left /></Btn>
          <Readout $w={106}>1.000 kHz</Readout>
          <Readout $w={107}>2.335 nV</Readout>
          <Btn $w={24} $h={15}><Arrow /></Btn>
        </ReadoutRow>
      </PlotColumn>
      <SidePanel $pad="9px 0 12px 4px">
        <Group $w={324} $h={36} $tight>
          <Legend $ml={5}>Span control</Legend>
          <BtnRow $gap={5} $pad="3px 0 0 21px">
            <Btn $w={85} $on>Set span</Btn><Btn $w={85} $off>Zero span</Btn><Btn $w={85} $off>Full span</Btn>
          </BtnRow>
        </Group>
        <SideBySide>
          <Group $w={154} $h={137}>
            <Legend $ml={5}>Frequency</Legend>
            <BtnRow $gap={0} $pad="3px 0 3px 72px"><Btn $w={44} $h={17} $off>Enter</Btn></BtnRow>
            <FieldRow $h={19}><FieldLabel $w={47} $right>Span:</FieldLabel><Input $off $h={19} $w={66}>100</Input><Input $off $h={19} $w={36} $pl={3}>kHz</Input></FieldRow>
            <FieldRow $mt={7}><FieldLabel $w={47} $right>Start:</FieldLabel><Input $off $w={66}>1</Input><Input $off $w={36} $pl={3}>kHz</Input></FieldRow>
            <FieldRow $h={19}><FieldLabel $w={47} $right>Center:</FieldLabel><Input $off $h={19} $w={66}>51</Input><Input $off $h={19} $w={36} $pl={3}>kHz</Input></FieldRow>
            <FieldRow $h={19}><FieldLabel $w={47} $right>End:</FieldLabel><Input $off $h={19} $w={66}>101</Input><Input $off $h={19} $w={36} $pl={3}>kHz</Input></FieldRow>
          </Group>
          <div>
            <Group $w={170} $h={75} $tight>
              <Legend $ml={6}>Amplitude</Legend>
              <BtnRow $gap={3} $pad="1px 0 4px 48px"><Btn $w={33}>dB</Btn><Btn $w={33}>dBm</Btn><Btn $w={33} $on>Lin</Btn></BtnRow>
              <FieldRow $h={19}><FieldLabel $w={44} $right>Range:</FieldLabel><Input $h={19} $w={66}>2</Input><Input $h={19} $w={45} $pl={6}>V/Div</Input></FieldRow>
              <FieldRow $mt={4} $h={19}><FieldLabel $w={44} $right>Ref:</FieldLabel><Input $off $h={19} $w={75}>0</Input><Input $off $h={19} $w={36} $pl={6}>dB</Input></FieldRow>
            </Group>
            <BorderedBox $w={170} $h={62} $pad="3px 0 0 14px">
              <div>Resolution freq:</div>
              <FieldRow $mt={1} $h={19}><Input $off $h={19} $w={93}>1</Input><Input $off $h={19} $w={36} $pl={3}>kHz</Input></FieldRow>
              <Sunken>1.000 kHz</Sunken>
            </BorderedBox>
          </div>
        </SideBySide>
        <ActionStrip>
          <BtnRow $gap={3}><Btn $w={40} $on>Start</Btn><Btn $w={40}>Stop</Btn></BtnRow>
          <StripDivider />
          <BtnRow $gap={3}><Btn $w={64}>Reverse</Btn><Btn $w={79} $off>Show refer.</Btn><Btn $w={66} $off>Set...</Btn></BtnRow>
        </ActionStrip>
        <Terminals $pad="0 0 0 172px">
          <Term $w={32}>Input</Term><Radio /><Term $w={48} /><Term $w={38}>Trigger</Term><Radio />
        </Terminals>
      </SidePanel>
    </Columns>
    <GripDots />
  </Floating>
);

const MEASURES = [
  "Time", "Channel_A", "Channel_B", "Channel_C", "Channel_D",
  "13.147 ms", "-488.465 mV", "-19.391 mV", "", "",
  "13.147 ms", "-488.465 mV", "-19.391 mV", "", "",
  "0.000 s", "0.000 V", "0.000 V", "", "",
];

const Knob = () => (
  <Ico w={34} h={34} c="none">
    <defs>
      <linearGradient id="knob" x1="0" y1="0" x2="1" y2="1">
        <stop offset="0" stopColor="#fff" /><stop offset=".4" stopColor="#e0e0e0" /><stop offset=".42" stopColor="#a0a0a0" /><stop offset="1" stopColor="#707070" />
      </linearGradient>
    </defs>
    <circle cx="17" cy="17" r="16.500" fill="url(#knob)" stroke="#888" strokeWidth=".7" />
    <path fill="#808080" d="M17 17L6 29A16 16 0 0 0 33 20L24 18Z" />
    <path fill="#c0c0c0" d="M17 17L5 28A16 16 0 0 1 2 22Z" />
    <circle cx="18" cy="17" r="6.500" fill="#d0d0d0" /><circle cx="18" cy="16" r="4" fill="#8a8a8a" />
    <path stroke="#fff" strokeWidth="2" d="M24 17.500H34" />
    <path stroke="#000" strokeWidth="2.500" strokeDasharray="5 1" fill="none" d="M11 30.500Q17 33.500 24 30.500" />
    <path stroke="#333" d="M13 15L15 13M14 18V16" />
  </Ico>
);

const Oscilloscope = () => (
  <Floating $x={738} $y={9} $w={602} $h={457} $active>
    <Caption $active><span>Four channel oscilloscope-XSC1</span><CloseX c="#fff" /></Caption>
    <Framed><ScopePlot /></Framed>
    <ScrollBar>
      <Ico w={6} h={8} c="#505050" sw={2}><path d="M5 .5L1.500 4L5 7.500" /></Ico>
      <Thumb />
      <Ico w={6} h={8} c="#505050" sw={2}><path d="M1 .5L4.500 4L1 7.500" /></Ico>
    </ScrollBar>
    <MeasureRow>
      <CursorBox>
        <CursorLine $h={17}><CursorName>T1</CursorName><Btn $w={13} $h={16}><Arrow left /></Btn><Btn $w={13} $h={16}><Arrow /></Btn></CursorLine>
        <CursorLine $h={17}><CursorName $up={2}>T2</CursorName><Btn $w={13} $h={15}><Arrow left /></Btn><Btn $w={13} $h={15}><Arrow /></Btn></CursorLine>
        <CursorLine $h={14}>T2-T1</CursorLine>
      </CursorBox>
      <MeasureTable>{MEASURES.map((m, i) => <span key={i}>{m}</span>)}</MeasureTable>
      <MeasureActions>
        <Btn $w={51} $h={17}>Reverse</Btn>
        <Btn $w={51}>Save</Btn>
        <BtnRow $gap={3} $pad="2px 0 0 6px"><span>GND</span><Radio /></BtnRow>
      </MeasureActions>
    </MeasureRow>
    <SettingsRow>
      <Group $w={168} $h={85}>
        <Legend $ml={6}>Timebase</Legend>
        <FieldRow $mt={2} $h={19} $pl={3}>
          <FieldLabel $w={47}>Scale:</FieldLabel>
          <Input $w={97} $h={19} $focus><Caret />200 us/Div</Input>
          <Spinner>
            <Btn $w={14} $h={9}><Ico w={5} h={3} c="none"><path fill="#000" d="M0 3H5L2.500 0Z" /></Ico></Btn>
            <Btn $w={14} $h={9}><Ico w={5} h={3} c="none"><path fill="#000" d="M0 0H5L2.500 3Z" /></Ico></Btn>
          </Spinner>
        </FieldRow>
        <FieldRow $pl={2}><FieldLabel $w={72}>X pos.(Div):</FieldLabel><Input $w={90}>0</Input></FieldRow>
        <BtnRow $gap={3.5} $pad="10px 0 0 4px">
          <Btn $w={25} $on>Y/T</Btn><Btn $w={34}>{"A/B >"}</Btn><Btn $w={39}>{"A+B >"}</Btn>
        </BtnRow>
      </Group>
      <Group $w={231} $h={85}>
        <Legend $ml={2}>Channel_A</Legend>
        <ChannelTop>
          <ChannelFields>
            <FieldRow $mt={1}><FieldLabel $w={47}>Scale:</FieldLabel><Input $w={103}>1  V/Div</Input></FieldRow>
            <FieldRow><FieldLabel $w={72}>Y pos.(Div):</FieldLabel><Input $w={78}>-1.6</Input></FieldRow>
          </ChannelFields>
          <KnobGrid>
            <span /><span>A</span><span />
            <span>D</span><Knob /><span>B</span>
            <span /><span>C</span><span />
          </KnobGrid>
        </ChannelTop>
        <BtnRow $gap={3.5} $pad="0 0 0 3px">
          <Btn $w={22}>AC</Btn><Btn $w={22}>0</Btn><Btn $w={22} $on>DC</Btn><Btn $w={16}>-</Btn>
          <BtnRow $gap={15.5} $pad="0 0 2px 18px"><Radio /><Radio /><Radio $empty /><Radio $empty /></BtnRow>
        </BtnRow>
      </Group>
      <Group $w={197} $h={85}>
        <Legend $ml={5}>Trigger</Legend>
        <FieldRow $h={19} $mt={1} $pl={12}>
          <FieldLabel $w={49}>Edge:</FieldLabel>
          <BtnRow $gap={5} $pad="0 0 5px 0">
            <Btn $w={25} $h={14} $on><Ico w={9} h={9}><path d="M0 8.500H4.500V.5H9M2.500 5L4.500 3L6.500 5" /></Ico></Btn>
            <Btn $w={25} $h={14}><Ico w={9} h={9}><path d="M0 .5H4.500V8.500H9M2.500 4L4.500 6L6.500 4" /></Ico></Btn>
          </BtnRow>
          <BtnRow $gap={3} $pad="0 0 5px 32px"><span>Ext</span><Radio $empty /></BtnRow>
        </FieldRow>
        <FieldRow $mt={1} $pl={12}><FieldLabel $w={48}>Level:</FieldLabel><Input $w={102}>0</Input><Input $w={27} $pl={7}>V</Input></FieldRow>
        <BtnRow $gap={2} $pad="14px 0 0 2px">
          <Btn $w={34} $h={17}>Single</Btn><Btn $w={40} $h={17}>Normal</Btn><Btn $w={30} $h={17}>Auto</Btn>
          <Btn $w={31} $h={17} $on>None</Btn><Btn $w={25} $h={17} $on>{"A >"}</Btn><Btn $w={22} $h={17} $off>Ext</Btn>
        </BtnRow>
      </Group>
    </SettingsRow>
    <GripDots />
  </Floating>
);

/* ---------- main window parts ---------- */

const MENUS: [string, string, string, number][] = [
  ["", "F", "ile", 31], ["", "E", "dit", 33], ["", "V", "iew", 38], ["", "P", "lace", 41], ["", "M", "CU", 40],
  ["", "S", "imulate", 59], ["Tra", "n", "sfer", 55], ["", "T", "ools", 41], ["", "R", "eports", 53],
  ["", "O", "ptions", 55], ["", "W", "indow", 57], ["", "H", "elp", 40],
];

const StandardTools = () => (
  <ToolRow>
    <Slot><PageIcon /></Slot><Slot><FolderIcon /></Slot><Slot><FolderIcon blue /></Slot><Slot><SaveIcon /></Slot>
    <Sep />
    <Slot><PrintIcon /></Slot><Slot><PreviewIcon /></Slot>
    <Sep />
    <Slot><CutIcon /></Slot><Slot><CopyIcon /></Slot><Slot><PasteIcon /></Slot>
    <Sep />
    <Slot><UndoIcon /></Slot><Slot $w={24}><UndoIcon flip /></Slot>
    <Sep $full $l={0} $r={12} />
    <Slot $w={21} $sunken><HierIcon /></Slot><Slot $w={1} /><Slot $w={21} $sunken><GridIcon /></Slot>
    <Slot><CompIcon /></Slot><Slot $w={25}><GraphIcon /></Slot><Slot $w={24}><CalcIcon /></Slot><Slot $w={21}><TreeIcon /></Slot>
    <Sep $l={3} $r={4} />
    <Slot><WizardIcon /></Slot><Slot $w={23}><DbIcon /></Slot>
    <Combo><span>--- In-Use List ---</span><Ico w={9} h={6} c="#404040"><path d="M.5 .5L4.500 5L8.500 .5" /></Ico></Combo>
    <Sep $l={4} $r={4} />
    <Slot><CheckRed /></Slot><Slot><PartArrow /></Slot>
    <Slot $w={10}><Ico w={5} h={3} c="none"><path fill="#000" d="M0 0H5L2.500 3Z" /></Ico></Slot>
    <Slot $w={26}><PartArrow gray /></Slot><Slot $w={20}><PartArrow cyan /></Slot>
  </ToolRow>
);

const ComponentTools = () => (
  <ToolRow>
    <Slot>{gp("M9 3V7M4 7.500H14M6 9.500H12M9 10V13")}</Slot>
    <Slot>{gp("M2 8L4 8L5 6L7 10L9 6L11 10L13 6L14 8H16")}</Slot>
    <Slot>{gp("M2 8.500H16M6.500 4V13L11 8.500ZM11.500 4V13")}</Slot>
    <Slot>{gp("M4 8.500H8M8.500 4V13M8.500 8L13 4M8.500 9L13 13M10 13H13V10")}</Slot>
    <Slot>{gp("M2 6.500H6M2 10.500H6M6.500 3V14L13 8.500ZM13 8.500H17")}</Slot>
    <Slot><Gate label="TTL" /></Slot>
    <Slot><Gate label="CMOS" /></Slot>
    <Slot>{gp("M3 9H7V14H3ZM7.500 9V14M7.500 3.500H15.500V14.500H11.500M11.500 6V11M13 3V14")}</Slot>
    <Slot>{gp("M5 2L2 7H8ZM3 8V13H7V8M10 8V13M10 8H14V13M15 8V11")}</Slot>
    <Slot>{gp("M3.500 3.500H14.500V14.500H3.500ZM6 6.500H12M6 9H12M6 11.500H12M9 5V13")}</Slot>
    <Slot>{gp("M2.500 4.500H15.500V14.500H2.500ZM5 8H8M10 8H13M5 3V5M13 3V5M5 11H8")}</Slot>
    <Slot><GlyphText>MISC</GlyphText></Slot>
    <Slot><Ico w={16} h={16} c="none"><path fill="#999" d="M3 3H15V12H3ZM1 12.500H5V14H1Z" /></Ico></Slot>
    <Slot>{gp("M9 14V8L4 3M9 8L14 3M9 8V3")}</Slot>
    <Slot><Ico w={18} h={16} c="#999"><circle cx="9" cy="8" r="4.500" /><path d="M1 8.500H4M14 8.500H17M7 10V6.500L9 9L11 6.500V10" /></Ico></Slot>
    <Slot><Ico w={16} h={16} c="none"><path fill="#999" d="M0 1H15V6L11 7L14 15H10L8 9L5 15H2L4 7L0 5Z" /></Ico></Slot>
    <Slot><Ico w={16} h={16} c="#999"><rect x="4.500" y="1.500" width="7" height="13" rx="3.500" /><path d="M3 5H6M3 8H6M3 11H6M10 5H13M10 8H13M10 11H13" /></Ico></Slot>
    <Sep />
    <Slot><Ico w={16} h={16} c="#999"><path fill="#999" d="M3 1H13V4H3ZM5 6H11V15H5Z" /><path d="M3 7.500H13M3 10.500H13M3 13.500H13" /></Ico></Slot>
    <Sep />
    <Slot>{gp("M1.500 2.500H6.500V6.500H1.500ZM10.500 9.500H16V13.500H10.500ZM4 7V11H10")}</Slot>
    <Slot><Ico w={16} h={16} c="#999" sw={2}><path d="M2 13H7V4H13" /></Ico></Slot>
    <Sep $full $l={2} $r={11} />
    <Slot $w={22} $sunken><Ico w={8} h={14} c="none"><path fill="#999" d="M0 0L8 7L0 14Z" /></Ico></Slot>
    <Slot><Ico w={8} h={9} c="none"><path fill="#000080" stroke="#000" strokeWidth=".5" d="M.5 0H3V9H.5ZM5 0H7.500V9H5Z" /></Ico></Slot>
    <Slot><Ico w={10} h={9} c="none"><path fill="#f00" stroke="#400" d="M.5 .5H9.500V8.500H.5Z" /></Ico></Slot>
    <Slot $w={20}><WrenchIcon /></Slot>
    <SimMode>Interactive</SimMode>
    <Sep $full $l={0} $r={12} />
    <Slot><ProbeTool /></Slot><Slot><ProbeTool /></Slot>
  </ToolRow>
);

const DesignToolbox = () => (
  <LeftDock>
    <DockHeader>
      <DockTitle>Design Toolbox</DockTitle>
      <RaisedButton><Ico w={5} h={3} c="none"><path fill="#999" d="M0 3H5L2.500 0Z" /></Ico></RaisedButton>
      <Slot $w={2} />
      <RaisedButton><BoldX /></RaisedButton>
    </DockHeader>
    <DockPanel>
      <DockTools>
        <Slot $w={20}><PageIcon navy /></Slot><Slot $w={32}><FolderIcon /></Slot><Slot $w={20}><SaveIcon /></Slot>
        <Slot $w={32}><Ico c="#000080"><path fill="#fff" stroke="#000" d="M1.500 5.500H11.500V14.500H1.500Z" /><path strokeWidth="2" d="M1 6H12" /><path stroke="#808080" d="M3 9.500H10M3 11.500H10" /><path stroke="#900" d="M14 6L11 3M11 5V2.500H13.500" /></Ico></Slot>
        <Slot $w={2} />
        <Slot $w={32}><Ico c="#808000"><path fill="#fff" d="M1.500 1.500H11.500V11H1.500ZM3.500 3.500H13.500V13H3.500Z" /><circle cx="10" cy="10" r="4.500" fill="#ff0" stroke="#000080" /><path stroke="#000" d="M10 7V10.500H12" /></Ico></Slot>
      </DockTools>
      <Tree>
        <TreeRow $indent={8}>
          <Ico w={9} h={9} c="#808080"><path fill="#fff" d="M.5 .5H8.500V8.500H.5Z" /><path stroke="#305090" d="M2 4.500H7" /></Ico>
          <Ico w={11} h={14} c="#808080"><path strokeDasharray="1 1" d="M1 7.500H7" /></Ico>
          <Ico w={9} h={14} c="none"><path fill="#0f0" stroke="#000" d="M.5 .5V13.500L8 7Z" /></Ico>
          <TreeLabel>{" Design1"}</TreeLabel>
        </TreeRow>
        <TreeRow $indent={31}>
          <Ico w={11} h={18} c="#808080"><path strokeDasharray="1 1" d="M.5 0V9.500H11" /></Ico>
          <SchematicDoc />
          <TreeLabel $sel>Design1</TreeLabel>
        </TreeRow>
      </Tree>
    </DockPanel>
    <TabStrip>
      <Tab $w={57} $h={23} $active $top={6}>Hierarchy</Tab>
      <Tab $w={60} $h={20} $top={1}>Visibility</Tab>
    </TabStrip>
  </LeftDock>
);

const SpreadsheetDock = () => (
  <BottomDock>
    <BottomInner>
      <BottomRail>
        <RaisedButton><BoldX /></RaisedButton>
        <RaisedButton><Ico w={3} h={5} c="none"><path fill="#999" d="M0 0V5L3 2.500Z" /></Ico></RaisedButton>
        <SideTitle><span>S</span></SideTitle>
      </BottomRail>
      <BottomBody>
        <ResultField />
        <ResultTabs><Tab $w={48} $h={20} $active $top={4}>Results</Tab><Tab $w={42} $h={18}>Nets</Tab></ResultTabs>
      </BottomBody>
    </BottomInner>
  </BottomDock>
);

const TaskbarPanel = () => (
  <Taskbar>
    <SystemButtons>
      <TaskButton $w={48}><Ico w={16} h={16} c="none"><path fill="#fff" d="M0 2.300L6.500 1.400V7.600H0ZM7.400 1.300L16 0V7.600H7.400ZM0 8.500H6.500V14.700L0 13.800ZM7.400 8.500H16V16L7.400 14.800Z" /></Ico></TaskButton>
      <TaskButton $w={48}><Ico w={16} h={16} c="#fff" sw={1.4}><circle cx="10" cy="6" r="5" /><path d="M6.500 9.500L.5 15.500" /></Ico></TaskButton>
      <TaskButton $w={48}><Ico w={16} h={16} c="#fff" sw={2}><circle cx="8" cy="8" r="6.700" /></Ico></TaskButton>
      <TaskButton $w={48}><Ico w={17} h={16} c="#fff" sw={1.3}><path d="M1 .5V3H11V.5M1 15.500V13H11V15.500M1 5.500H11V10.500H1ZM15 .5V3M15 8V15.500" /><path fill="#fff" d="M14.500 4.500H15.500V6.500H14.500Z" /></Ico></TaskButton>
    </SystemButtons>
    <TaskButton $w={48}><Ico w={22} h={18} c="none"><path fill="#e5a50a" d="M0 0H8L10 2H22V17H0Z" /><path fill="#ffd35c" d="M0 4H22V17H0Z" /><path fill="#3f97dc" d="M4 18V12Q4 10 6 10H16Q18 10 18 12V18H14V14H8V18Z" /></Ico></TaskButton>
    <TaskButton $w={49}>
      <Ico w={24} h={24} c="none">
        <circle cx="12" cy="12" r="12" fill="#1583d8" />
        <path fill="#3ccf8f" d="M1 8C4 -1 16 -2 21 5C26 12 22 17 16 16C19 12 15 7 10 7C6 7 2 9 1 8Z" />
        <path fill="#2bb6e0" d="M1 9C3 1 13 -1 18 3C12 2 5 4 1 9Z" />
        <path fill="#0c59a4" d="M10 8C5 12 6 21 14 24C5 24 0 18 1 12C3 9 7 7 10 8Z" />
        <path fill="#1c1c1c" d="M13 10C10 13 12 18 17 19C20 19 22 18 24 16L24 17C21 17 16 18 14 15C12.500 13 13 11 13 10Z" />
      </Ico>
    </TaskButton>
    <TaskButton $w={49}>
      <Ico w={24} h={24} c="none">
        <circle cx="12" cy="13" r="10.800" fill="#ff5a2a" />
        <path fill="#ffb52b" d="M13 1C15 4 21 6 22.500 12C22 6 18 4 15 0ZM3 5L6 7L10 6C13 5 20 7 21 13C19 22 8 24 5 17C2 12 1 9 3 5Z" />
        <circle cx="12.500" cy="13.500" r="5.500" fill="#7a3fc8" />
        <path fill="#ff8a1f" d="M5 9C9 8 11 9 13 11C10 11 9 13 10 15C7 16 4 13 5 9Z" />
        <path fill="#e62a5e" d="M3 17C6 23 16 24 20 19C16 21 8 21 3 17Z" />
      </Ico>
    </TaskButton>
    <TaskButton $w={49}>
      <Ico w={24} h={24} c="none">
        <ellipse cx="12" cy="9" rx="11" ry="7" transform="rotate(-15 12 9)" fill="#f4f4f4" stroke="#d23c3c" strokeWidth="1.500" />
        <path fill="#b8b8b8" d="M2 14C6 18 14 16 20 12L19 15C14 19 6 20 2 16Z" />
        <path stroke="#777" strokeWidth="1.500" d="M8 5L17 15M15 4L13 14" />
        <circle cx="14" cy="19" r="2.500" stroke="#2a86d8" strokeWidth="2" /><circle cx="20" cy="16" r="2.500" stroke="#2a86d8" strokeWidth="2" />
      </Ico>
    </TaskButton>
    <TaskButton $w={50}>
      <Ico w={24} h={24} c="none">
        <path fill="#a9d3ee" d="M2 14C1 8 8 5 13 6C20 7 19 12 16 14C17 20 12 22 8 22C4 21 2 18 2 14Z" />
        <circle cx="7" cy="10.500" r="2" fill="#e04a3a" /><circle cx="12" cy="9.500" r="2" fill="#f4c430" /><circle cx="6" cy="15" r="2" fill="#3aa655" /><circle cx="9" cy="19" r="2" fill="#7a4ac8" /><circle cx="13" cy="15" r="2" fill="#fff" />
        <path fill="#e0a060" d="M19 1L23 3L20 8L14 22L12 21L17 7Z" /><path fill="#8a5a30" d="M18 4L22 1L23 5L20 8L17 7Z" />
      </Ico>
    </TaskButton>
    <TaskButton $w={48} $active><AppIcon s={22} /></TaskButton>
    <Tray>
      <TrayIcon $w={16}><Ico w={12} h={7} c="#fff" sw={1.2}><path d="M.5 6.500L6 1L11.500 6.500" /></Ico></TrayIcon>
      <TrayIcon $w={32}><Ico w={16} h={12} c="#fff"><path d="M5.500 3.500H14.500V9.500H4M2.500 0V3M.5 3.500H5M2.500 5V8" /><path fill="#fff" d="M6.500 5.500H12.500V8H6.500ZM15.500 5V8" /></Ico></TrayIcon>
      <TrayIcon $w={17}><Ico w={13} h={13} c="#fff" sw={1.2}><path d="M1 12C1 6 6 1 12 1M4 12C4 8 7 4 12 4M7 12.500C7 9 9 7.500 12 7" opacity=".85" /><circle cx="11" cy="11.500" r="1" fill="#fff" /></Ico></TrayIcon>
      <TrayIcon $w={30}><Ico w={17} h={14} c="#fff"><path d="M.5 5V9.500H3L6.500 12.500V1.500L3 5ZM9 5C10 6.500 10 8 9 9.500M11.500 3C13.500 6 13.500 9 11.500 11.500M14 1C17 5 17 10 14 13" /></Ico></TrayIcon>
      <TrayIcon $w={28}>ENG</TrayIcon>
      <Clock>10:14 AM<br />2022-03-17</Clock>
      <TrayIcon $w={45} $pr={11}><Ico w={16} h={16} c="#fff" sw={1.2}><path d="M.6 1H15.400V12H11L8 15V12H.6Z" /></Ico></TrayIcon>
      <ShowDesktop />
    </Tray>
  </Taskbar>
);

export default function App() {
  return (
    <>
      <Global />
      <Desktop>
        <MainWindow>
          <TitleBar>
            <AppIcon s={15} />
            <TitleText>Design1 - Multisim - [Design1 *]</TitleText>
            <CaptionButtons>
              <Ico w={10} h={10} c="#888"><path d="M.5 2.500H7.500V9.500H.5ZM2.500 2V.5H9.500V7.500H8" /></Ico>
              <CloseX c="#888" />
            </CaptionButtons>
          </TitleBar>
          <MenuBar>
            <SchematicDoc />
            <Slot $w={8} />
            {MENUS.map(([a, u, b, w]) => <MenuItem key={u + b} $w={w}>{a}<u>{u}</u>{b}</MenuItem>)}
            <MdiButtons>
              <RaisedButton><Ico w={8} h={8}><path d="M2.500 .5H7.500V4.500H2.500ZM.5 3V7.500H5V5" /></Ico></RaisedButton>
              <RaisedButton><BoldX /></RaisedButton>
            </MdiButtons>
          </MenuBar>
          <StandardTools />
          <ComponentTools />
          <Middle>
            <DesignToolbox />
            <Workspace>
              <DocFrame><Schematic /></DocFrame>
              <DocFoot />
            </Workspace>
            <RightDock>
              {Array.from({ length: 22 }, (_, i) => <InstIcon key={i} kind={i === 0 ? 3 : (i * 3) % 4} />)}
            </RightDock>
          </Middle>
          <SpreadsheetDock />
          <StatusBar>
            <StatusCell $w={183}>Design1: Simulating...</StatusCell>
            <StatusCell $w={183}>{" Tran: 0.015 s"}</StatusCell>
            <Progress />
          </StatusBar>
        </MainWindow>
        <TaskbarPanel />
        <BodePlotter />
        <SpectrumAnalyzer />
        <Oscilloscope />
      </Desktop>
    </>
  );
}
